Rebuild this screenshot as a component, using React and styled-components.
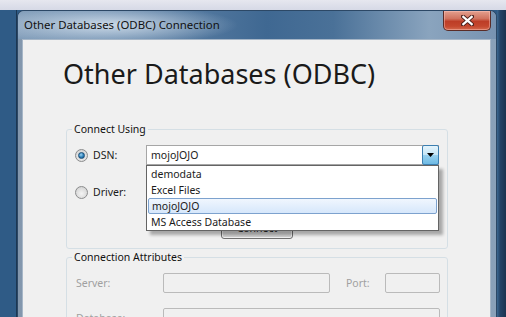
import React from "react";
import styled, { createGlobalStyle } from "styled-components";

const Global = createGlobalStyle`
  html, body {
    margin: 0;
    padding: 0;
    width: 506px;
    height: 317px;
    overflow: hidden;
    background: #2e5a85;
  }
  body {
    font-family: "Noto Sans", "Open Sans", sans-serif;
    font-size: 10.5px;
    color: #1b1b1b;
  }
`;

const Screen = styled.div`
  width: 506px;
  height: 317px;
  display: flex;
  flex-direction: column;
  overflow: hidden;
`;

const TopStrip = styled.div`
  height: 10px;
  flex: none;
  background: linear-gradient(180deg, #e6e7ef, #d6d9e6);
`;

const Desk = styled.div`
  flex: 1;
  display: flex;
  min-height: 0;
`;

const DeskLeft = styled.div`
  width: 16px;
  flex: none;
  background: #2f5b86;
  border-right: 1px solid #1c3753;
`;

const DeskRight = styled.div`
  flex: 1;
  background: linear-gradient(90deg, #3b6790 0, #244468 3px, #1b3350 100%);
`;

const Window = styled.div`
  width: 478px;
  flex: none;
  display: flex;
  flex-direction: column;
  border: 1px solid #2c4866;
  border-bottom: none;
  border-radius: 7px 7px 0 0;
  background: linear-gradient(90deg, #8397ad 0%, #6f8aa6 25%, #5d7fa2 50%, #6f8eae 75%, #8aa1b9 100%);
  overflow: hidden;
`;

const TitleBar = styled.div`
  height: 28px;
  flex: none;
  display: flex;
  justify-content: space-between;
  align-items: flex-start;
  background:
    radial-gradient(ellipse 130px 20px at 90px 14px, rgba(214, 226, 238, 0.9), rgba(214, 226, 238, 0) 100%),
    linear-gradient(90deg, #7f9bb8 0%, #6a8bad 20%, #3f6892 52%, #4a7198 66%, #8aa4be 86%, #7893b1 100%);
`;

const Title = styled.span`
  padding: 6px 0 0 6px;
  font-size: 11.4px;
  color: #111;
  white-space: nowrap;
`;

const CloseButton = styled.div`
  width: 46px;
  height: 19px;
  margin-right: 5px;
  display: flex;
  align-items: center;
  justify-content: center;
  border: 1px solid #5a2c27;
  border-top: none;
  border-radius: 0 0 5px 5px;
  background: linear-gradient(180deg, #e3a08f 0%, #d0735f 40%, #bd3d27 55%, #c4472e 80%, #d46a4f 100%);
  box-shadow: inset 0 0 0 1px rgba(255, 200, 190, 0.45);
`;

const Content = styled.div`
  flex: 1;
  margin: 0 5px 0 4px;
  background: #f0f0f0;
  border: 1px solid #a6b6c7;
  border-bottom: none;
  padding: 18px 42px 0 43px;
`;

const Heading = styled.h1`
  margin: 0 0 31px -3px;
  font-weight: normal;
  font-size: 27px;
  line-height: 32px;
  color: #1a1a1a;
  white-space: nowrap;
`;

const Group = styled.fieldset`
  margin: 0;
  padding: 8px 8px ${(p) => p.$bottom || 9}px 8px;
  border: 1px solid #d5dfe5;
  border-radius: 3px;
  min-width: 0;
`;

const Legend = styled.legend`
  margin-left: -3px;
  padding: 0 2px;
  font-size: 10.5px;
  line-height: 16px;
  color: #111;
`;

const ConnectRows = styled.div`
  display: grid;
  grid-template-columns: 71px 1fr;
  row-gap: 17px;
`;

const RadioLabel = styled.label`
  display: flex;
  align-items: center;
  gap: 5px;
  height: 20px;
  color: #1b1b1b;
`;

const Radio = styled.span`
  width: 11px;
  height: 11px;
  flex: none;
  border-radius: 50%;
  border: 1px solid #8b8c8d;
  background: radial-gradient(circle at 50% 60%, #f4f4f4 0, #dcdcdc 60%, #c9c9c9 100%);
  display: flex;
  align-items: center;
  justify-content: center;
  &::after {
    content: "";
    width: 5px;
    height: 5px;
    border-radius: 50%;
    display: ${(p) => (p.$checked ? "block" : "none")};
    background: radial-gradient(circle at 40% 35%, #9fd3f2 0, #2a7fb8 55%, #164c7a 100%);
    border: 1px solid #1b4e78;
  }
`;

const ComboWrap = styled.div`
  position: relative;
  height: 20px;
`;

const Combo = styled.div`
  height: 18px;
  display: flex;
  align-items: center;
  border: 1px solid ${(p) => (p.$disabled ? "#c2c2c2" : "#a6a6a6")};
  background: ${(p) => (p.$disabled ? "#f0f0f0" : "#fff")};
  padding-left: 4px;
`;

const ComboText = styled.span`
  flex: 1;
  white-space: nowrap;
`;

const ComboArrow = styled.span`
  width: 15px;
  height: 18px;
  flex: none;
  display: flex;
  align-items: center;
  justify-content: center;
  border: 1px solid #3c7fb1;
  margin: -1px -1px -1px 0;
  border-radius: 2px;
  background: linear-gradient(180deg, #e5f4fc 0%, #c4e5f6 50%, #98d1ef 51%, #6ebae4 100%);
`;

const DropList = styled.ul`
  position: absolute;
  left: 0;
  top: 20px;
  width: 291px;
  margin: 0;
  padding: 0;
  list-style: none;
  background: #fff;
  border: 1px solid #646464;
  box-shadow: 4px 4px 3px rgba(0, 0, 0, 0.3);
  z-index: 2;
`;

const DropItem = styled.li`
  height: ${(p) => (p.$active ? 14 : 16)}px;
  margin: 0 ${(p) => (p.$active ? 1 : 0)}px;
  padding-left: ${(p) => (p.$active ? 3 : 4)}px;
  display: flex;
  align-items: center;
  white-space: nowrap;
  border: ${(p) => (p.$active ? "1px solid #7da2ce" : "none")};
  border-radius: 2px;
  background: ${(p) => (p.$active ? "linear-gradient(180deg, #f0f6fe 0%, #d6e7fb 100%)" : "transparent")};
`;

const ButtonRow = styled.div`
  grid-column: 1 / -1;
  display: flex;
  justify-content: center;
  margin-top: -3px;
`;

const Button = styled.button`
  width: 72px;
  height: 23px;
  padding: 0;
  font-family: inherit;
  font-size: 10.5px;
  color: #1b1b1b;
  border: 1px solid #707070;
  border-radius: 3px;
  background: linear-gradient(180deg, #f2f2f2 0%, #ebebeb 50%, #dddddd 51%, #cfcfcf 100%);
  box-shadow: inset 0 0 0 1px rgba(255, 255, 255, 0.7);
`;

const AttrGrid = styled.div`
  display: grid;
  grid-template-columns: 88px 167px 15px 40px 55px;
  grid-auto-rows: 20px;
  row-gap: 15px;
`;

const AttrLabel = styled.span`
  display: flex;
  align-items: center;
  padding-left: 1px;
  color: #a0a0a0;
  grid-column: ${(p) => p.$col || "auto"};
  white-space: nowrap;
`;

const Field = styled.div`
  border: 1px solid #bababa;
  border-radius: 2px;
  background: #f0f0f0;
  grid-column: ${(p) => p.$col || "auto"};
`;

function CloseIcon() {
  return (
    <svg width="13" height="11" viewBox="0 0 13 11">
      <path d="M2 1.5 L11 9.5 M11 1.5 L2 9.5" stroke="#4a1f1a" strokeWidth="4" strokeLinecap="square" />
      <path d="M2.3 1.8 L10.7 9.2 M10.7 1.8 L2.3 9.2" stroke="#fff" strokeWidth="2.2" strokeLinecap="square" />
    </svg>
  );
}

function ArrowIcon() {
  return (
    <svg width="7" height="4" viewBox="0 0 7 4">
      <path d="M0 0 H7 L3.5 4 Z" fill="#000" />
    </svg>
  );
}

export default function App() {
  const dsnList = ["demodata", "Excel Files", "mojoJOJO", "MS Access Database"];
  const selected = "mojoJOJO";

  return (
    <>
      <Global />
      <Screen>
        <TopStrip />
        <Desk>
          <DeskLeft />
          <Window>
            <TitleBar>
              <Title>Other Databases (ODBC) Connection</Title>
              <CloseButton>
                <CloseIcon />
              </CloseButton>
            </TitleBar>
            <Content>
              <Heading>Other Databases (ODBC)</Heading>

              <Group>
                <Legend>Connect Using</Legend>
                <ConnectRows>
                  <RadioLabel>
                    <Radio $checked />
                    DSN:
                  </RadioLabel>
                  <ComboWrap>
                    <Combo>
                      <ComboText>{selected}</ComboText>
                      <ComboArrow>
                        <ArrowIcon />
                      </ComboArrow>
                    </Combo>
                    <DropList>
                      {dsnList.map((name) => (
                        <DropItem key={name} $active={name === selected}>
                          {name}
                        </DropItem>
                      ))}
                    </DropList>
                  </ComboWrap>

                  <RadioLabel>
                    <Radio />
                    Driver:
                  </RadioLabel>
                  <ComboWrap>
                    <Combo $disabled>
                      <ComboText />
                    </Combo>
                  </ComboWrap>

                  <ButtonRow>
                    <Button>Connect</Button>
                  </ButtonRow>
                </ConnectRows>
              </Group>

              <Group $bottom={20}>
                <Legend>Connection Attributes</Legend>
                <AttrGrid>
                  <AttrLabel>Server:</AttrLabel>
                  <Field />
                  <AttrLabel $col="4">Port:</AttrLabel>
                  <Field />
                  <AttrLabel>Database:</AttrLabel>
                  <Field $col="2 / 6" />
                </AttrGrid>
              </Group>
            </Content>
          </Window>
          <DeskRight />
        </Desk>
      </Screen>
    </>
  );
}
